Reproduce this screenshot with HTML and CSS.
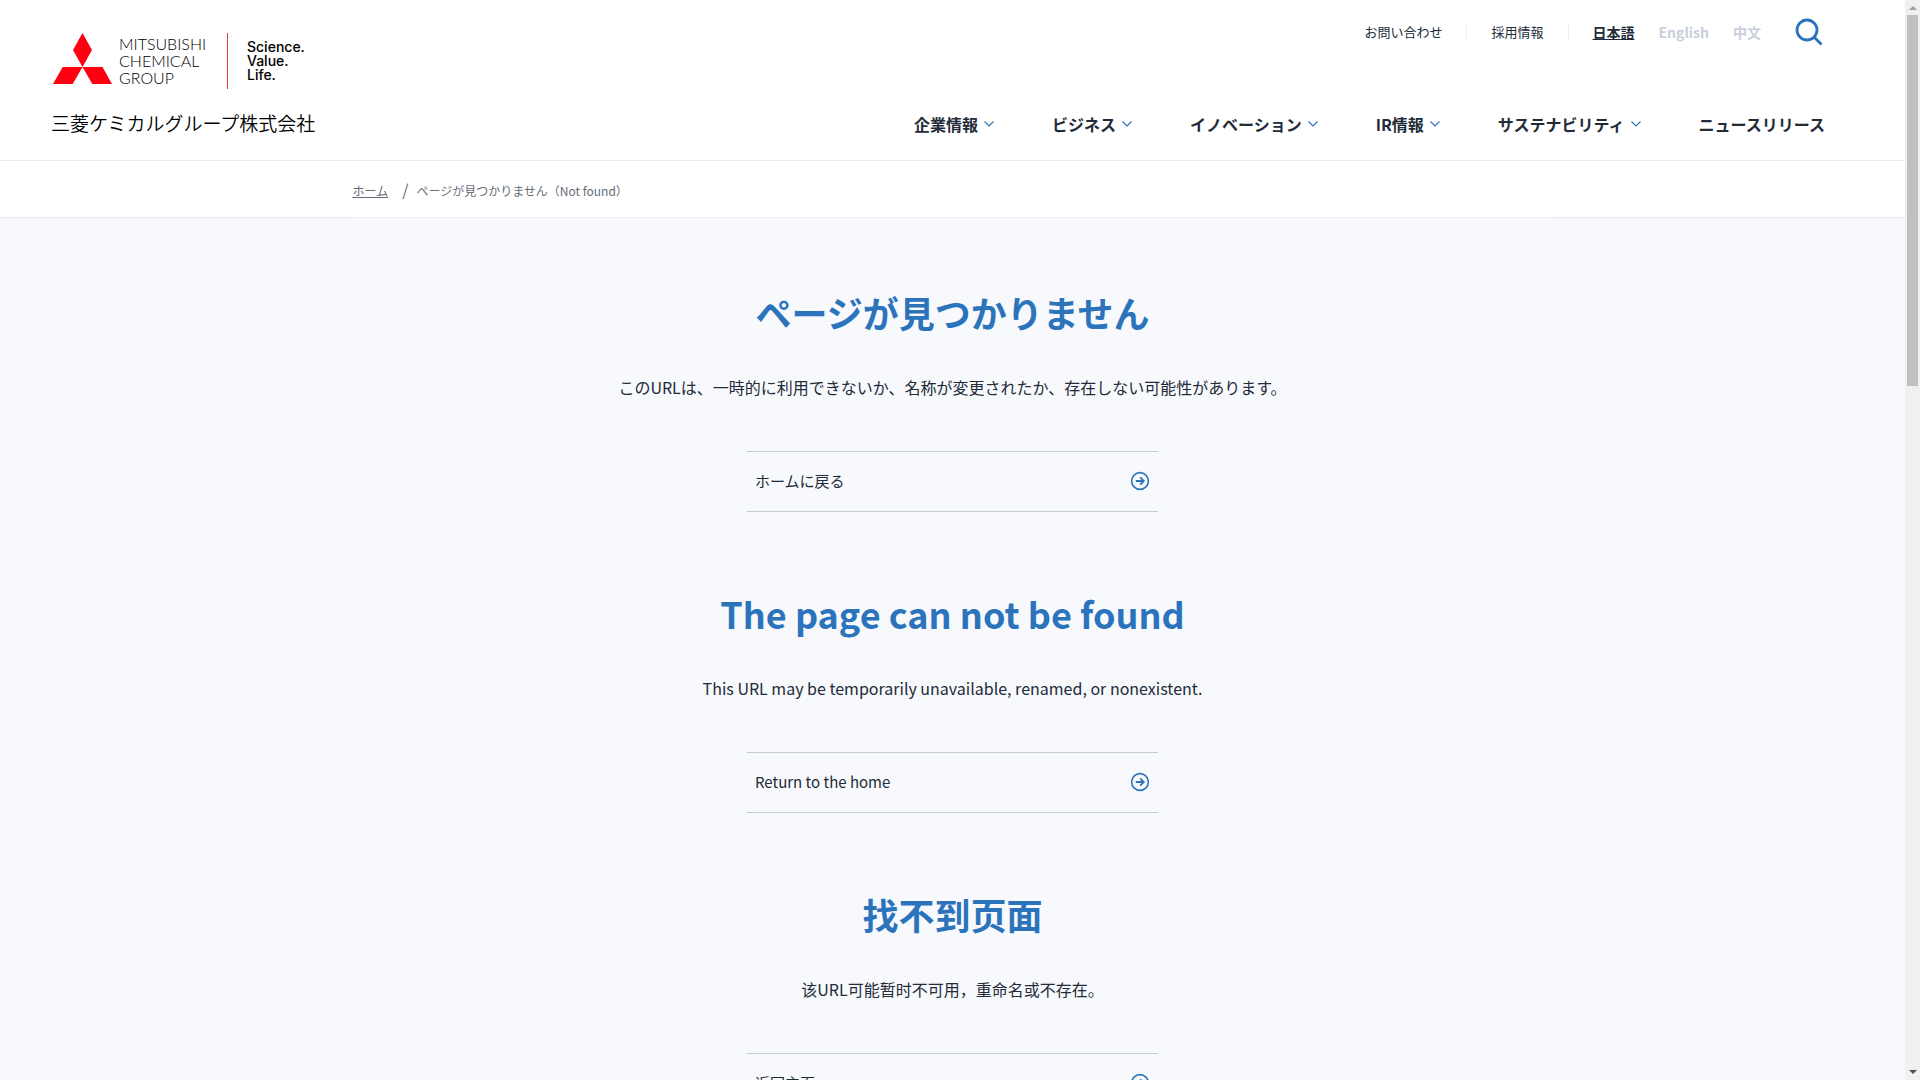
FILE: index.html
```
<!DOCTYPE html>
<html lang="ja">
<head>
    <meta charset="UTF-8">
    <meta name="viewport" content="width=device-width, initial-scale=1.0">
    <title>ページが見つかりません（Not found）</title>
    <link rel="stylesheet" href="styles.css">
</head>
<body>
    <!-- shared icons -->
    <svg class="sprite" aria-hidden="true">
        <symbol id="chevron" viewBox="0 0 10 6">
            <path d="M0.5 0.5 L5 5 L9.5 0.5" fill="none" stroke="#2b74bc" stroke-width="1.2"/>
        </symbol>
        <symbol id="arrow" viewBox="0 0 20 20">
            <circle cx="10" cy="10" r="8.4" fill="none" stroke="#2b74bc" stroke-width="1.6"/>
            <path d="M5.8 10 H13.4 M10.2 6.4 L13.8 10 L10.2 13.6" fill="none" stroke="#2b74bc" stroke-width="1.8"/>
        </symbol>
    </svg>

    <div class="page">
        <header class="header">
            <a href="#" class="logo">
                <svg width="264" height="104" viewBox="0 0 264 104" role="img" aria-label="三菱ケミカルグループ株式会社">
                    <g fill="#ff0010">
                        <path d="M30.5 1 L40 18 L30.5 35 L21 18 Z"/>
                        <path d="M10.7 35 H30.5 L20.7 52 H1 Z"/>
                        <path d="M30.5 35 H50.5 L60 52 H40.3 Z"/>
                    </g>
                    <g class="logo-name">
                        <text x="67" y="18">MITSUBISHI</text>
                        <text x="67" y="35">CHEMICAL</text>
                        <text x="67" y="52">GROUP</text>
                    </g>
                    <path d="M175.5 1 V57" stroke="#e8384a" stroke-width="1"/>
                    <g class="logo-tagline">
                        <text x="195" y="20">Science.</text>
                        <text x="195" y="34">Value.</text>
                        <text x="195" y="48">Life.</text>
                    </g>
                    <text class="logo-company" x="-1" y="99">三菱ケミカルグループ株式会社</text>
                </svg>
            </a>

            <div class="header-menu">
                <div class="sub-menu">
                    <ul class="sub-links">
                        <li><a href="#">お問い合わせ</a></li>
                        <li><a href="#">採用情報</a></li>
                    </ul>
                    <ul class="languages">
                        <li><a href="#" class="current">日本語</a></li>
                        <li><a href="#">English</a></li>
                        <li><a href="#">中文</a></li>
                    </ul>
                    <button type="button" class="search" aria-label="検索">
                        <svg width="28" height="28" viewBox="0 0 28 28">
                            <g fill="none" stroke="#2b74bc" stroke-width="2.8">
                                <circle cx="12" cy="12" r="10"/>
                                <path d="M19 19 L26.5 26.5"/>
                            </g>
                        </svg>
                    </button>
                </div>
                <nav class="main-nav">
                    <a href="#">企業情報<svg><use href="#chevron"/></svg></a>
                    <a href="#">ビジネス<svg><use href="#chevron"/></svg></a>
                    <a href="#">イノベーション<svg><use href="#chevron"/></svg></a>
                    <a href="#">IR情報<svg><use href="#chevron"/></svg></a>
                    <a href="#">サステナビリティ<svg><use href="#chevron"/></svg></a>
                    <a href="#">ニュースリリース</a>
                </nav>
            </div>
        </header>

        <div class="breadcrumb-bar">
            <ol class="breadcrumb">
                <li><a href="#">ホーム</a></li>
                <li>ページが見つかりません（Not found）</li>
            </ol>
        </div>

        <main class="main">
            <section class="notice">
                <h1>ページが見つかりません</h1>
                <p>このURLは、一時的に利用できないか、名称が変更されたか、存在しない可能性があります。</p>
                <a href="#" class="home-link">ホームに戻る<svg><use href="#arrow"/></svg></a>
            </section>

            <section class="notice" lang="en">
                <h2>The page can not be found</h2>
                <p>This URL may be temporarily unavailable, renamed, or nonexistent.</p>
                <a href="#" class="home-link">Return to the home<svg><use href="#arrow"/></svg></a>
            </section>

            <section class="notice" lang="zh">
                <h2>找不到页面</h2>
                <p>该URL可能暂时不可用，重命名或不存在。</p>
                <a href="#" class="home-link">返回主页<svg><use href="#arrow"/></svg></a>
            </section>
        </main>
    </div>

    <div class="scrollbar" aria-hidden="true">
        <span class="scroll-up"></span>
        <span class="scroll-thumb"></span>
        <span class="scroll-down"></span>
    </div>
</body>
</html>
```
FILE: styles.css
```
* {
    box-sizing: border-box;
}
body {
    display: flex;
    height: 100vh;
    margin: 0;
    overflow: hidden;
    font-family: "Noto Sans CJK JP", "Noto Sans", sans-serif;
    font-size: 16px;
    color: #222b38;
    background: #fff;
}
a {
    color: inherit;
    text-decoration: none;
}
ul, ol {
    display: flex;
    margin: 0;
    padding: 0;
    list-style: none;
}
svg {
    display: block;
}
.sprite {
    position: absolute;
    width: 0;
    height: 0;
}
.page {
    flex: 1;
    min-width: 0;
    overflow: hidden;
}

/* header */
.header {
    display: flex;
    justify-content: space-between;
    height: 161px;
    padding: 0 80px 0 52px;
    border-bottom: 1px solid #ebebeb;
}
.logo {
    padding-top: 32px;
    color: #000;
}
.logo text {
    fill: #000;
}
.logo-name {
    font-family: Lato, sans-serif;
    font-size: 16px;
    font-weight: 300;
}
.logo-tagline {
    font-family: Inter, sans-serif;
    font-size: 14px;
    font-weight: 500;
}
.logo-company {
    font-size: 19px;
    font-weight: 350;
}
.header-menu {
    display: flex;
    flex-direction: column;
    align-items: flex-end;
}
.sub-menu {
    display: flex;
    align-items: center;
    height: 64px;
    padding-right: 2px;
}
.sub-links {
    font-size: 13px;
    line-height: 14px;
}
.sub-links li {
    padding: 0 24px;
    border-right: 1px solid #ebebeb;
}
.languages {
    gap: 24px;
    padding-left: 24px;
    font-size: 14px;
    font-weight: bold;
    color: #c8cfdd;
}
.languages .current {
    color: #222b38;
    text-decoration: underline;
}
.search {
    margin-left: 34px;
    padding: 0;
    border: none;
    background: none;
    cursor: pointer;
}
.main-nav {
    display: flex;
    gap: 58px;
    padding-top: 48px;
    font-weight: bold;
    line-height: 24px;
}
.main-nav a {
    display: flex;
    align-items: center;
    gap: 6px;
}
.main-nav svg {
    width: 10px;
    height: 6px;
}

/* breadcrumb */
.breadcrumb-bar {
    height: 57px;
    border-bottom: 1px solid #ebebeb;
}
.breadcrumb {
    align-items: baseline;
    max-width: 1200px;
    height: 58px;
    margin: 0 auto;
    padding-top: 18px;
    border-bottom: 2px solid #ebedf1;
    font-size: 12px;
    line-height: 20px;
    color: #646b76;
}
.breadcrumb a {
    text-decoration: underline;
}
.breadcrumb li + li::before {
    content: "/";
    margin: 0 8px 0 14px;
    font-size: 16px;
}

/* messages */
.main {
    padding-top: 67px;
    background: #f8f9fd;
}
.notice {
    padding-bottom: 74px;
    text-align: center;
}
.notice h1, .notice h2 {
    margin: 0 0 34px;
    font-size: 36px;
    line-height: 54px;
    color: #2b74bc;
}
.notice p {
    margin: 0 0 50px;
    line-height: 28px;
}
.home-link {
    display: flex;
    align-items: center;
    justify-content: space-between;
    width: 411px;
    height: 61px;
    margin: 0 auto;
    padding: 0 8px 2px;
    border-top: 1px solid #c3ccd9;
    border-bottom: 1px solid #c3ccd9;
    font-size: 15px;
}
.home-link svg {
    width: 20px;
    height: 20px;
}
.notice[lang="zh"] {
    font-family: "Noto Sans CJK SC", "Noto Sans", sans-serif;
}

/* scrollbar */
.scrollbar {
    display: flex;
    flex-direction: column;
    align-items: center;
    width: 15px;
    padding: 6px 0;
    background: #f0f0f0;
}
.scroll-up, .scroll-down {
    border: 4px solid transparent;
}
.scroll-up {
    border-top: none;
    border-bottom-color: #a0a0a0;
}
.scroll-down {
    margin-top: auto;
    border-bottom: none;
    border-top-color: #505050;
}
.scroll-thumb {
    width: 11px;
    height: calc(35% - 3px);
    margin-top: 5px;
    background: #c0c0c0;
}
```
